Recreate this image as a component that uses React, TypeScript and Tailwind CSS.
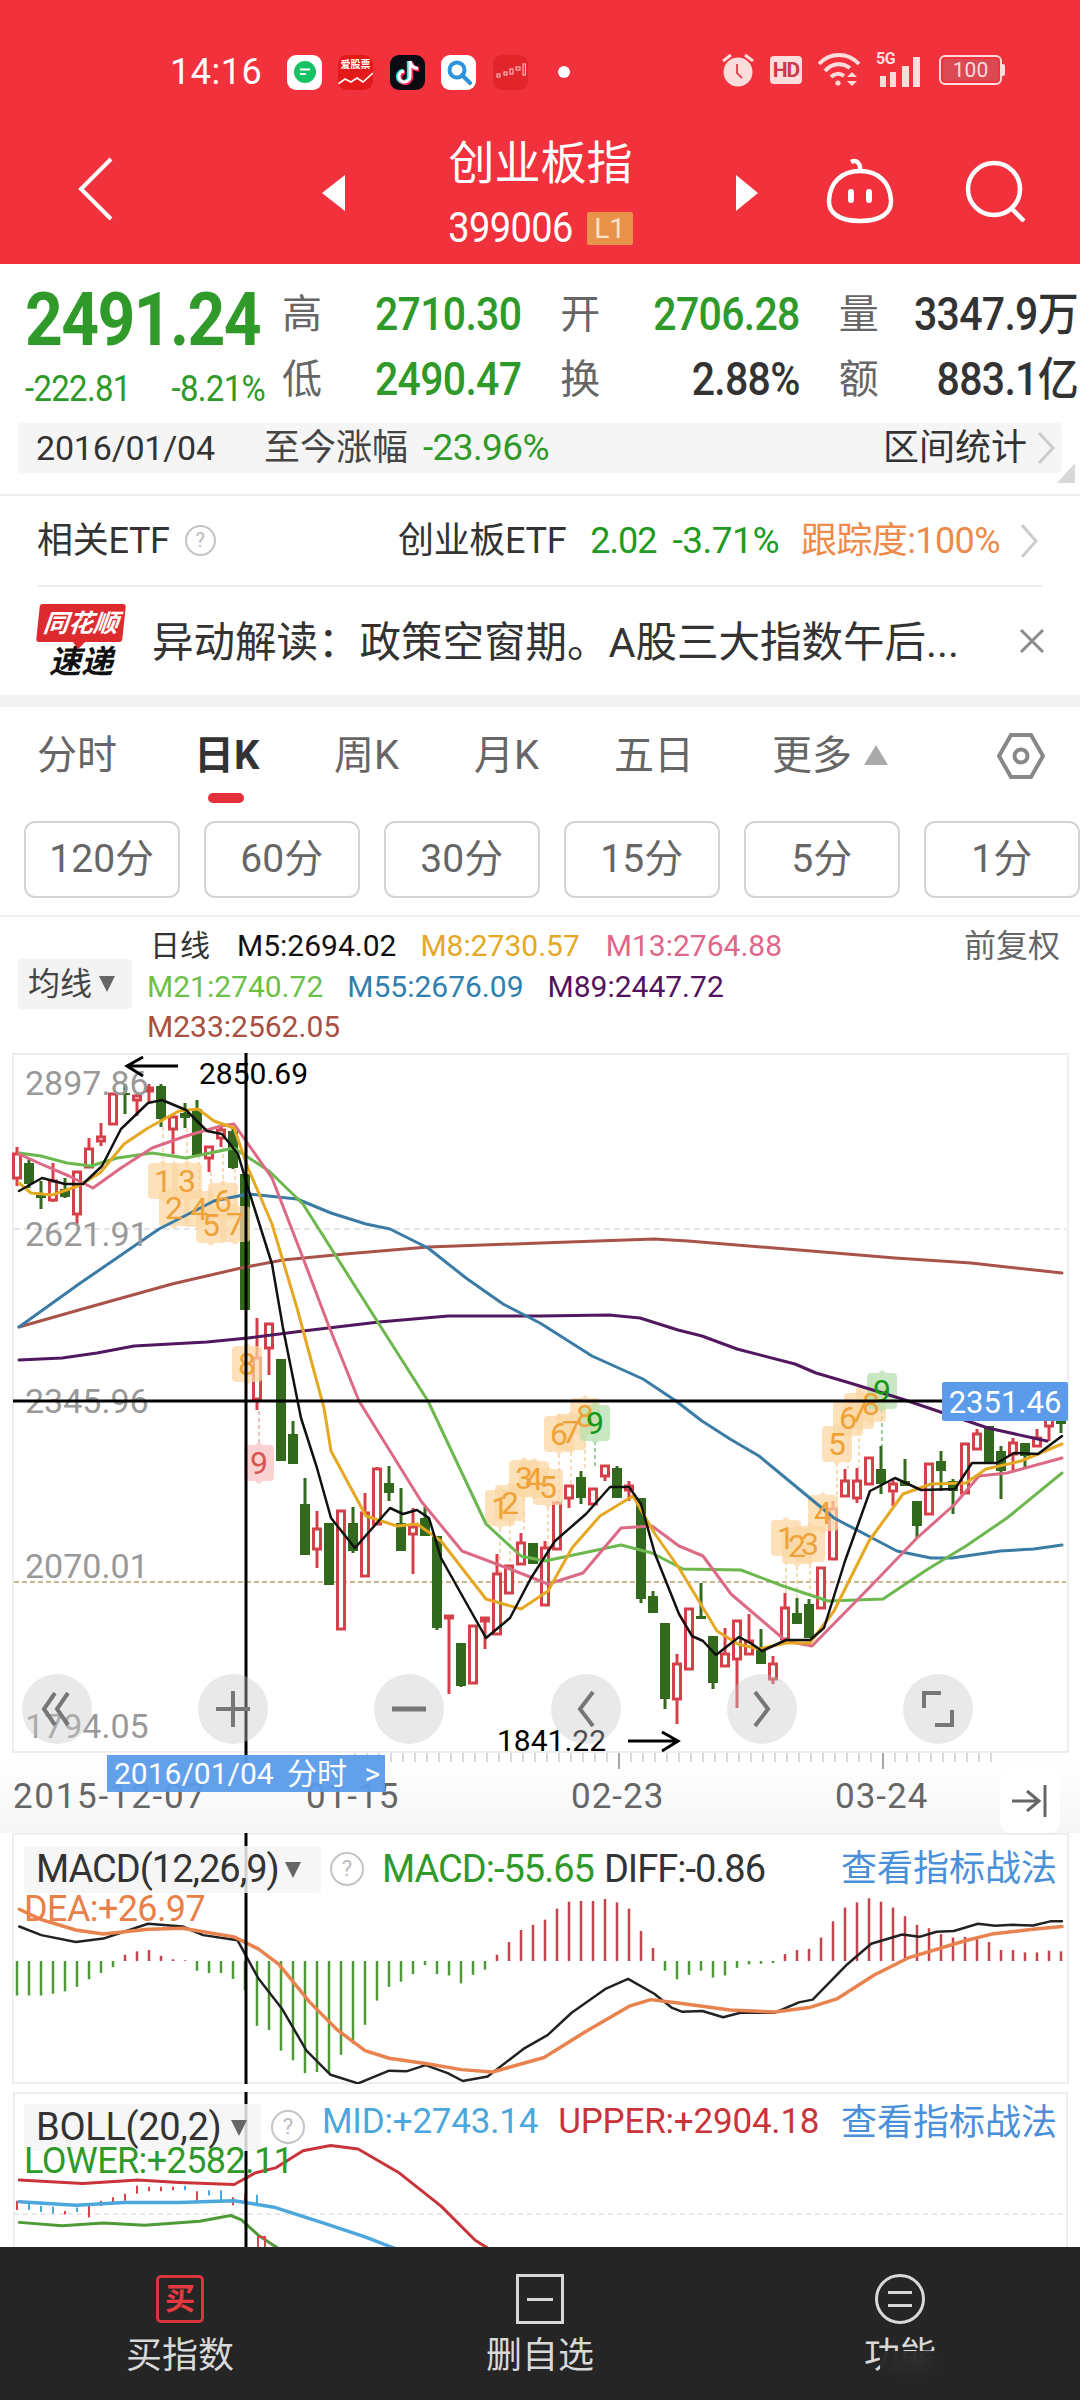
import React from "react";

const GREEN = "#2f9a2a";
const slotX = (i: number) => 17 + 12 * i;

type Candle = [number, number, number, number, "r" | "g"];

// top, bottom of body, then wick top and bottom
const candles: Candle[] = [
  [1153, 1177, 1146, 1185, "r"], [1162, 1183, 1158, 1187, "g"], [1192, 1197, 1180, 1208, "g"], [1180, 1199, 1162, 1201, "r"],
  [1188, 1196, 1177, 1197, "g"], [1171, 1213, 1171, 1223, "r"], [1148, 1166, 1137, 1166, "r"], [1136, 1140, 1122, 1145, "r"],
  [1093, 1123, 1093, 1123, "r"], [1092, 1094, 1083, 1113, "g"], [1095, 1099, 1093, 1115, "r"], [1087, 1090, 1083, 1102, "r"],
  [1085, 1118, 1083, 1126, "g"], [1116, 1128, 1116, 1153, "r"], [1112, 1117, 1102, 1127, "g"], [1108, 1154, 1099, 1154, "g"],
  [1146, 1157, 1146, 1171, "r"], [1129, 1137, 1125, 1146, "r"], [1130, 1167, 1126, 1168, "g"], [1173, 1309, 1173, 1309, "g"],
  [1357, 1398, 1317, 1409, "r"], [1323, 1347, 1323, 1374, "r"], [1358, 1460, 1358, 1460, "g"], [1433, 1463, 1420, 1463, "g"],
  [1503, 1554, 1477, 1554, "g"], [1528, 1548, 1510, 1567, "r"], [1522, 1584, 1522, 1584, "g"], [1510, 1628, 1510, 1628, "r"],
  [1522, 1550, 1506, 1552, "g"], [1512, 1575, 1492, 1575, "r"], [1468, 1523, 1466, 1523, "r"], [1482, 1492, 1465, 1500, "g"],
  [1522, 1550, 1487, 1550, "g"], [1526, 1533, 1507, 1573, "r"], [1517, 1535, 1506, 1535, "g"], [1535, 1627, 1535, 1629, "g"],
  [1615, 1617, 1615, 1693, "r"], [1642, 1685, 1642, 1686, "g"], [1625, 1682, 1625, 1682, "r"], [1617, 1620, 1617, 1648, "r"],
  [1573, 1633, 1553, 1633, "r"], [1565, 1592, 1565, 1592, "r"], [1542, 1563, 1532, 1563, "r"], [1542, 1563, 1542, 1563, "g"],
  [1547, 1604, 1540, 1604, "r"], [1502, 1548, 1500, 1548, "r"], [1485, 1497, 1485, 1507, "r"], [1476, 1497, 1470, 1503, "g"],
  [1488, 1503, 1488, 1504, "r"], [1465, 1475, 1465, 1480, "r"], [1467, 1497, 1465, 1497, "g"], [1485, 1489, 1480, 1500, "r"],
  [1497, 1598, 1497, 1602, "g"], [1595, 1612, 1590, 1612, "g"], [1622, 1698, 1622, 1708, "g"], [1663, 1698, 1653, 1723, "r"],
  [1608, 1668, 1608, 1668, "r"], [1615, 1618, 1582, 1618, "g"], [1635, 1682, 1635, 1688, "g"], [1653, 1665, 1627, 1665, "r"],
  [1620, 1658, 1620, 1707, "r"], [1640, 1653, 1613, 1653, "r"], [1647, 1663, 1628, 1663, "g"], [1663, 1678, 1655, 1683, "r"],
  [1607, 1638, 1592, 1638, "r"], [1612, 1623, 1597, 1623, "g"], [1603, 1637, 1598, 1637, "g"], [1567, 1607, 1567, 1607, "r"],
  [1508, 1558, 1500, 1558, "r"], [1480, 1495, 1468, 1495, "r"], [1480, 1497, 1467, 1502, "r"], [1457, 1483, 1457, 1483, "r"],
  [1468, 1483, 1445, 1493, "g"], [1483, 1490, 1477, 1505, "r"], [1480, 1485, 1458, 1485, "g"], [1500, 1525, 1500, 1537, "g"],
  [1463, 1513, 1463, 1513, "r"], [1460, 1470, 1450, 1490, "g"], [1480, 1490, 1478, 1513, "g"], [1443, 1492, 1443, 1492, "r"],
  [1433, 1448, 1428, 1448, "r"], [1425, 1462, 1425, 1462, "g"], [1450, 1470, 1445, 1498, "g"], [1442, 1453, 1437, 1470, "r"],
  [1442, 1455, 1442, 1468, "g"], [1437, 1445, 1428, 1445, "r"], [1415, 1425, 1408, 1440, "r"], [1415, 1423, 1415, 1432, "g"],
];

const maLines: { color: string; width: number; pts: number[][] }[] = [
  {
    color: "#a8524a",
    width: 3,
    pts: [[19, 1326], [86, 1307], [172, 1283], [241, 1267], [283, 1259], [345, 1253], [428, 1246], [541, 1242], [654, 1238], [688, 1240], [799, 1249], [895, 1257], [971, 1262], [1062, 1272]],
  },
  {
    color: "#52185f",
    width: 3,
    pts: [[19, 1359], [62, 1357], [97, 1352], [134, 1345], [207, 1341], [248, 1337], [303, 1330], [379, 1321], [448, 1315], [541, 1315], [609, 1314], [640, 1317], [678, 1329], [702, 1335], [737, 1348], [795, 1363], [816, 1372], [850, 1382], [902, 1398], [988, 1427], [1047, 1440]],
  },
  {
    color: "#3a7ca5",
    width: 3,
    pts: [[19, 1326], [79, 1283], [159, 1228], [214, 1200], [248, 1193], [297, 1198], [331, 1212], [366, 1223], [390, 1228], [428, 1247], [466, 1277], [503, 1303], [540, 1322], [592, 1355], [643, 1378], [676, 1400], [702, 1420], [730, 1438], [759, 1455], [834, 1517], [897, 1550], [931, 1557], [952, 1557], [1000, 1550], [1034, 1548], [1062, 1544]],
  },
  {
    color: "#6cb84f",
    width: 3,
    pts: [[19, 1152], [41, 1155], [67, 1162], [91, 1165], [117, 1157], [152, 1152], [186, 1157], [234, 1147], [269, 1170], [303, 1203], [379, 1323], [428, 1400], [486, 1523], [521, 1555], [545, 1560], [621, 1544], [652, 1552], [683, 1568], [741, 1569], [783, 1585], [828, 1600], [883, 1598], [928, 1568], [966, 1545], [1007, 1517], [1062, 1472]],
  },
  {
    color: "#dd6a85",
    width: 3,
    pts: [[19, 1153], [41, 1163], [69, 1175], [93, 1187], [121, 1167], [152, 1147], [186, 1135], [221, 1125], [234, 1123], [272, 1177], [303, 1257], [328, 1323], [359, 1400], [421, 1500], [462, 1550], [510, 1568], [548, 1583], [583, 1572], [621, 1527], [652, 1525], [679, 1545], [703, 1555], [731, 1593], [786, 1640], [812, 1645], [869, 1587], [917, 1537], [955, 1503], [979, 1475], [1007, 1472], [1062, 1457]],
  },
  {
    color: "#e5a823",
    width: 3,
    pts: [[19, 1182], [31, 1192], [52, 1194], [78, 1185], [100, 1172], [124, 1143], [148, 1127], [179, 1110], [198, 1108], [214, 1120], [234, 1127], [248, 1167], [272, 1223], [297, 1307], [324, 1407], [331, 1450], [366, 1515], [397, 1525], [417, 1523], [441, 1540], [486, 1598], [521, 1608], [548, 1590], [572, 1547], [600, 1515], [633, 1495], [655, 1533], [679, 1567], [717, 1630], [738, 1643], [759, 1648], [786, 1642], [810, 1642], [834, 1610], [869, 1540], [903, 1493], [931, 1483], [966, 1482], [986, 1468], [1021, 1460], [1062, 1443]],
  },
  {
    color: "#111111",
    width: 2.5,
    pts: [[19, 1190], [42, 1177], [65, 1183], [83, 1183], [102, 1165], [121, 1128], [148, 1102], [162, 1099], [186, 1109], [207, 1130], [222, 1133], [238, 1153], [248, 1187], [272, 1263], [283, 1327], [301, 1417], [317, 1467], [331, 1517], [355, 1547], [390, 1507], [403, 1513], [417, 1509], [429, 1517], [441, 1557], [486, 1637], [510, 1617], [531, 1577], [555, 1540], [586, 1513], [610, 1486], [629, 1486], [641, 1503], [655, 1553], [679, 1613], [692, 1635], [703, 1640], [716, 1654], [739, 1636], [752, 1643], [762, 1650], [786, 1639], [810, 1639], [824, 1627], [845, 1560], [870, 1490], [895, 1477], [921, 1489], [955, 1488], [972, 1462], [997, 1462], [1014, 1452], [1038, 1453], [1062, 1435]],
  },
];

const badges: [string, number, number, "o" | "r" | "g"][] = [
  ["1", 163, 1180, "o"], ["3", 187, 1180, "o"], ["2", 174, 1207, "o"], ["4", 199, 1208, "o"], ["5", 211, 1224, "o"], ["6", 223, 1200, "o"], ["7", 235, 1223, "o"],
  ["8", 247, 1363, "o"], ["9", 259, 1462, "r"],
  ["1", 500, 1507, "o"], ["2", 510, 1502, "o"], ["3", 524, 1477, "o"], ["4", 534, 1478, "o"], ["5", 548, 1486, "o"], ["6", 559, 1433, "o"], ["7", 571, 1431, "o"], ["8", 585, 1415, "o"], ["9", 595, 1422, "g"],
  ["1", 786, 1537, "o"], ["2", 797, 1545, "o"], ["3", 810, 1543, "o"], ["4", 823, 1512, "o"], ["5", 837, 1443, "o"], ["6", 848, 1417, "o"], ["7", 859, 1410, "o"], ["8", 871, 1403, "o"], ["9", 882, 1390, "g"],
];

const connectors: [number, number, number, string][] = [
  [163, 1126, 1165, "#f3cfa0"], [187, 1127, 1165, "#f3cfa0"], [174, 1153, 1190, "#f3cfa0"], [199, 1154, 1192, "#f3cfa0"], [211, 1171, 1205, "#f3cfa0"], [223, 1146, 1185, "#f3cfa0"], [235, 1168, 1205, "#f3cfa0"],
  [259, 1410, 1443, "#eeaaaa"], [500, 1527, 1573, "#f3cfa0"], [510, 1522, 1565, "#f3cfa0"], [524, 1497, 1532, "#f3cfa0"], [548, 1506, 1547, "#f3cfa0"], [559, 1453, 1500, "#f3cfa0"], [571, 1451, 1485, "#f3cfa0"], [585, 1435, 1470, "#f3cfa0"], [595, 1440, 1465, "#7fbf7f"],
  [786, 1560, 1592, "#f3cfa0"], [797, 1565, 1597, "#f3cfa0"], [810, 1563, 1598, "#f3cfa0"], [837, 1462, 1500, "#f3cfa0"], [848, 1437, 1468, "#f3cfa0"], [859, 1430, 1467, "#f3cfa0"], [882, 1408, 1445, "#7fbf7f"],
];

// bar end y for each slot, read off the 2.9x crop
const macdBars = [390, 390, 390, 385, 378, 365, 343, 325, 308, 272, 262, 258, 275, 285, 288, 318, 325, 325, 342, 375, 478, 490, 550, 578, 615, 612, 615, 562, 530, 475, 405, 365, 350, 328, 302, 328, 332, 355, 330, 315, 272, 235, 200, 185, 170, 138, 118, 116, 116, 110, 120, 138, 203, 252, 318, 343, 330, 318, 338, 332, 310, 300, 298, 296, 270, 258, 255, 222, 175, 135, 120, 108, 118, 135, 160, 185, 195, 212, 222, 220, 225, 235, 258, 258, 265, 265, 260, 262];
const macdBlack = [[28, 190], [60, 215], [110, 235], [150, 225], [215, 182], [265, 190], [295, 215], [345, 230], [375, 340], [410, 430], [445, 550], [480, 620], [520, 645], [550, 620], [565, 608], [590, 610], [618, 592], [650, 615], [672, 638], [708, 625], [760, 545], [795, 505], [830, 440], [880, 370], [912, 342], [950, 385], [975, 425], [990, 437], [1020, 435], [1050, 453], [1075, 440], [1125, 440], [1160, 410], [1180, 402], [1230, 300], [1265, 240], [1310, 213], [1335, 220], [1360, 205], [1385, 203], [1420, 182], [1445, 188], [1470, 185], [1500, 187], [1525, 175], [1542, 175]];
const macdOrange = [[28, 140], [60, 170], [110, 200], [150, 212], [215, 198], [265, 195], [340, 220], [375, 255], [405, 300], [450, 410], [490, 490], [530, 550], [565, 572], [620, 588], [670, 605], [715, 612], [790, 570], [850, 495], [915, 420], [945, 402], [985, 412], [1060, 432], [1125, 438], [1175, 425], [1215, 400], [1270, 330], [1320, 280], [1400, 232], [1440, 212], [1500, 198], [1542, 190]];
const bollRed = [[28, 925], [120, 935], [200, 925], [260, 932], [340, 938], [370, 905], [400, 890], [440, 840], [480, 825], [520, 835], [580, 905], [640, 1000], [690, 1100], [710, 1125]];
const bollBlue = [[28, 988], [110, 998], [180, 990], [260, 990], [340, 985], [400, 1005], [470, 1050], [530, 1090], [575, 1125]];
const bollGreen = [[28, 1048], [90, 1058], [150, 1050], [210, 1056], [290, 1045], [335, 1028], [350, 1040], [375, 1085], [405, 1125]];
const bollMini: [number, number, number, string][] = [
  [0, 985, 1012, "#d9444c"], [1, 995, 1012, "#4ba7dc"], [2, 1000, 1018, "#4ba7dc"], [3, 1003, 1022, "#4ba7dc"], [4, 1015, 1025, "#d9444c"], [5, 1005, 1018, "#4ba7dc"], [6, 995, 1034, "#d9444c"],
  [7, 985, 1000, "#d9444c"], [8, 975, 990, "#d9444c"], [9, 965, 985, "#d9444c"], [10, 942, 965, "#d9444c"], [11, 945, 958, "#d9444c"], [12, 945, 958, "#d9444c"], [13, 945, 955, "#d9444c"], [14, 942, 955, "#4ba7dc"],
  [15, 958, 990, "#d9444c"], [16, 955, 970, "#4ba7dc"], [17, 955, 990, "#4ba7dc"], [18, 975, 998, "#d9444c"], [19, 965, 985, "#d9444c"], [20, 968, 1000, "#4ba7dc"],
];

const pts = (list: number[][]) => list.map((p) => p.join(",")).join(" ");
const crop = (list: number[][]) => list.map(([x, y]) => [x / 1.452, 1860 + y / 2.9]);

function Poly({ points, color, width }: { points: number[][]; color: string; width: number }) {
  return <polyline points={pts(points)} fill="none" stroke={color} strokeWidth={width} strokeLinejoin="round" strokeLinecap="round" />;
}

function KChart() {
  return (
    <svg className="block w-[1080px] h-[700px] overflow-visible" viewBox="0 1052 1080 700">
      <rect x={13} y={1053} width={1055} height={698} fill="none" stroke="#eeeeee" strokeWidth={2} />
      <line x1={14} x2={1066} y1={1228} y2={1228} stroke="#dddddd" strokeWidth={1.5} strokeDasharray="6 4" />
      <line x1={14} x2={1066} y1={1581} y2={1581} stroke="#c9b88f" strokeWidth={2} strokeDasharray="5 3" />

      {connectors.map(([x, a, b, c], i) => (
        <line key={i} x1={x} x2={x} y1={a} y2={b} stroke={c} strokeWidth={1.5} strokeDasharray="4 3" />
      ))}

      {candles.map(([top, bottom, wTop, wBottom, kind], i) => {
        const x = slotX(i);
        const c = kind === "r" ? "#d4404a" : "#33691e";
        return (
          <g key={i}>
            <line x1={x} x2={x} y1={wTop} y2={wBottom} stroke={c} strokeWidth={3} />
            {kind === "r" ? (
              <rect x={x - 3.5} y={top} width={7} height={bottom - top} fill="#ffffff" stroke={c} strokeWidth={3} />
            ) : (
              <rect x={x - 5} y={top} width={10} height={bottom - top} fill={c} />
            )}
          </g>
        );
      })}

      {badges.map(([, x, y, kind], i) => (
        <path
          key={i}
          d={`M${x - 15} ${y - 14} q0 -4 4 -4 l7 0 l4 -3 l4 3 l7 0 q4 0 4 4 l0 28 q0 4 -4 4 l-7 0 l-4 3 l-4 -3 l-7 0 q-4 0 -4 -4z`}
          fill={kind === "o" ? "#fbd7a4" : kind === "r" ? "#f8c3c3" : "#b5dfae"}
          opacity={0.75}
        />
      ))}

      {maLines.map((l) => (
        <Poly key={l.color} points={l.pts} color={l.color} width={l.width} />
      ))}

      {badges.map(([label, x, y, kind], i) => (
        <text key={i} x={x} y={y + 11} textAnchor="middle" fontSize={32} fill={kind === "o" ? "#efa238" : kind === "r" ? "#d9534f" : "#129a12"}>
          {label}
        </text>
      ))}

      <text x={25} y={1094} fontSize={34} fill="#999999">2897.86</text>
      <text x={25} y={1245} fontSize={34} fill="#999999">2621.91</text>
      <text x={25} y={1412} fontSize={34} fill="#999999">2345.96</text>
      <text x={25} y={1577} fontSize={34} fill="#999999">2070.01</text>
      <text x={25} y={1737} fontSize={34} fill="#999999">1794.05</text>

      <line x1={13} x2={943} y1={1400} y2={1400} stroke="#000000" strokeWidth={3} />
      <line x1={246} x2={246} y1={1052} y2={1752} stroke="#000000" strokeWidth={3} />

      <g fill="none" stroke="#000000" strokeWidth={3}>
        <path d="M178 1065 L127 1065 M143 1056 L127 1065 L143 1075" />
        <path d="M628 1740 L678 1740 M662 1731 L678 1740 L662 1750" />
      </g>
      <text x={199} y={1083} fontSize={30} fill="#000000">2850.69</text>
      <text x={497} y={1750} fontSize={30} fill="#000000">1841.22</text>

      <rect x={942} y={1381} width={126} height={39} rx={2} fill="#5b9bea" />
      <text x={1005} y={1412} fontSize={31} fill="#ffffff" textAnchor="middle">2351.46</text>
    </svg>
  );
}

function RoundControl({ children }: { children: React.ReactNode }) {
  return (
    <div className="w-[70px] h-[70px] rounded-full bg-[#c8c8c8]/40 flex items-center justify-center">
      <svg width="40" height="40" viewBox="0 0 40 40" fill="none" stroke="#777777" strokeWidth="4">
        {children}
      </svg>
    </div>
  );
}

function ChartControls() {
  return (
    <div className="absolute left-[22px] right-[107px] top-[621px] flex justify-between">
      <RoundControl>
        <path d="M18 4 L7 20 L18 36 M31 4 L20 20 L31 36" />
      </RoundControl>
      <RoundControl>
        <path d="M20 2 V38 M3 20 H37" />
      </RoundControl>
      <RoundControl>
        <path d="M3 20 H37" strokeWidth="5" />
      </RoundControl>
      <RoundControl>
        <path d="M27 3 L14 20 L27 37" />
      </RoundControl>
      <RoundControl>
        <path d="M13 3 L26 20 L13 37" />
      </RoundControl>
      <RoundControl>
        <path d="M23 4 H6 V19 M17 36 H34 V21" />
      </RoundControl>
    </div>
  );
}

function XAxis() {
  const ticks = Array.from({ length: 54 }, (_, i) => 355 + i * 12);
  return (
    <div className="relative h-[80px] bg-gradient-to-b from-white to-[#f6f6f6] text-[35px] text-[#666666] overflow-hidden">
      <svg className="absolute left-0 top-0 w-[1080px] h-[30px]" viewBox="0 0 1080 30">
        {ticks.map((x) => (
          <line key={x} x1={x} x2={x} y1={0} y2={x === 619 || x === 883 ? 16 : 9} stroke={x === 619 || x === 883 ? "#888888" : "#cccccc"} strokeWidth={1.5} />
        ))}
        <line x1={246} x2={246} y1={0} y2={10} stroke="#000000" strokeWidth={3} />
      </svg>
      <div className="absolute inset-x-0 top-[19px] h-[50px]">
        <span className="absolute left-[13px] leading-[50px] tracking-[1.7px]">2015-12-07</span>
        <span className="absolute left-[306px] leading-[50px] tracking-[1px]">01-15</span>
        <span className="absolute left-[571px] leading-[50px] tracking-[1px]">02-23</span>
        <span className="absolute left-[835px] leading-[50px] tracking-[1px]">03-24</span>
      </div>
      <div className="absolute left-[107px] top-[2px] w-[278px] h-[37px] bg-[#5b9bea]/95 text-white text-[30px] leading-[37px] pl-[7px] whitespace-nowrap">
        2016/01/04 <span className="ml-[6px]">分时</span> <span className="ml-[10px]">&gt;</span>
      </div>
      <div className="absolute left-[1000px] top-[15px] w-[60px] h-[65px] bg-white rounded-[12px] flex items-center justify-center">
        <svg width="40" height="34" viewBox="0 0 40 34" fill="none" stroke="#666666" strokeWidth="3">
          <path d="M2 17 H28 M17 7 L29 17 L17 27 M35 1 V33" />
        </svg>
      </div>
    </div>
  );
}

function HelpDot({ size }: { size: number }) {
  return (
    <span
      className="rounded-full border-[2px] border-[#c4c4c4] text-[#bbbbbb] flex items-center justify-center shrink-0"
      style={{ width: size, height: size, fontSize: size * 0.65 }}
    >
      ?
    </span>
  );
}

function Caret() {
  return <span className="w-0 h-0 border-x-[8px] border-x-transparent border-t-[16px] border-t-[#666666] shrink-0" />;
}

function MacdPanel() {
  return (
    <div className="relative h-[251px] overflow-hidden">
      <svg className="block w-[1080px] h-[251px]" viewBox="0 1832 1080 251">
        <rect x={13} y={1833} width={1055} height={249} fill="none" stroke="#eeeeee" strokeWidth={2} />
        {macdBars.map((end, i) => {
          const x = slotX(i);
          const y = 1860 + end / 2.9;
          const red = y < 1960;
          return <line key={i} x1={x} x2={x} y1={1960} y2={y} stroke={red ? "#c0474d" : "#4f9a38"} strokeWidth={2.5} />;
        })}
        <Poly points={crop(macdBlack)} color="#222222" width={2.5} />
        <Poly points={crop(macdOrange)} color="#e8834f" width={3.5} />
        <line x1={246} x2={246} y1={1832} y2={2083} stroke="#000000" strokeWidth={3} />
      </svg>
      <div className="absolute left-[24px] top-[13px] h-[47px] w-[297px] bg-[#f4f4f4]/85 rounded-[4px] flex items-center justify-between pl-[12px] pr-[20px] text-[38px] text-[#333333]">
        <span className="whitespace-nowrap tracking-[-1px]">MACD(12,26,9)</span>
        <Caret />
      </div>
      <div className="absolute left-[330px] top-[19px]">
        <HelpDot size={34} />
      </div>
      <div className="absolute left-[382px] top-[13px] h-[47px] flex items-center gap-[10px] text-[38px] whitespace-nowrap tracking-[-1px]">
        <span style={{ color: GREEN }}>MACD:-55.65</span>
        <span className="text-[#333333]">DIFF:-0.86</span>
      </div>
      <span className="absolute left-[841px] top-[13px] leading-[47px] text-[36px] text-[#4a90d9]">查看指标战法</span>
      <span className="absolute left-[24px] top-[53px] leading-[46px] text-[36px] text-[#e8804a] tracking-[-0.6px]">DEA:+26.97</span>
    </div>
  );
}

function BollPanel() {
  return (
    <div className="relative flex-1 overflow-hidden">
      <svg className="block w-[1080px] h-[156px]" viewBox="0 2091 1080 156">
        <path d="M14 2247 V2092 H1067 V2247" fill="none" stroke="#eeeeee" strokeWidth={2} />
        <line x1={14} x2={1066} y1={2213} y2={2213} stroke="#e2e2e2" strokeWidth={1.5} strokeDasharray="5 4" />
        {bollMini.map(([i, a, b, c]) => (
          <line key={i} x1={slotX(i)} x2={slotX(i)} y1={1860 + a / 2.9} y2={1860 + b / 2.9} stroke={c} strokeWidth={2} />
        ))}
        <Poly points={crop(bollRed)} color="#c9333a" width={3} />
        <Poly points={crop(bollBlue)} color="#4ba7dc" width={3.5} />
        <Poly points={crop(bollGreen)} color="#4f9a38" width={3} />
        <rect x={258} y={2236} width={7} height={12} fill="none" stroke="#d9444c" strokeWidth={2} />
        <line x1={246} x2={246} y1={2091} y2={2247} stroke="#000000" strokeWidth={3} />
      </svg>
      <div className="absolute left-[24px] top-[12px] h-[47px] w-[237px] bg-[#f4f4f4]/85 rounded-[4px] flex items-center justify-between pl-[12px] pr-[14px] text-[38px] text-[#333333]">
        <span className="whitespace-nowrap tracking-[-0.3px]">BOLL(20,2)</span>
        <Caret />
      </div>
      <div className="absolute left-[271px] top-[18px]">
        <HelpDot size={34} />
      </div>
      <div className="absolute left-[322px] top-[7px] h-[47px] flex items-center gap-[20px] text-[35px] whitespace-nowrap tracking-[-0.2px]">
        <span className="text-[#4ba7dc]">MID:+2743.14</span>
        <span className="text-[#c9333a]">UPPER:+2904.18</span>
      </div>
      <span className="absolute left-[841px] top-[8px] leading-[47px] text-[36px] text-[#4a90d9]">查看指标战法</span>
      <span className="absolute left-[24px] top-[47px] leading-[44px] text-[36px] tracking-[-0.6px] whitespace-nowrap" style={{ color: GREEN }}>
        LOWER:+2582.11
      </span>
    </div>
  );
}

function AppIcons() {
  return (
    <div className="flex items-center">
      <span className="w-[35px] h-[35px] rounded-[9px] bg-white flex items-center justify-center">
        <svg width="24" height="24" viewBox="0 0 24 24">
          <circle cx="12" cy="12" r="11" fill="#16c264" />
          <path d="M7 9.5 H17 M7 14 H13" stroke="#ffffff" strokeWidth="2" />
        </svg>
      </span>
      <span className="ml-[16px] w-[35px] h-[35px] rounded-[9px] bg-[#e41a1a] overflow-hidden relative block">
        <span className="absolute inset-x-0 top-[5px] text-center text-[10px] leading-[10px] font-bold text-white">爱股票</span>
        <svg className="absolute left-0 top-[16px]" width="35" height="16" viewBox="0 0 35 16">
          <path d="M0 13 L7 8 L13 11 L19 7 L25 11 L35 2" fill="none" stroke="#ffffff" strokeWidth="1.6" />
        </svg>
      </span>
      <span className="ml-[17px] w-[35px] h-[35px] rounded-[9px] bg-[#0b0b14] flex items-center justify-center">
        <svg width="26" height="28" viewBox="0 0 26 28" fill="none" strokeWidth="4.4">
          <path d="M15 3 V18.5 A5.5 5.5 0 1 1 9 13 M15 3 C15.5 7.5 18.5 10 23 10.5" stroke="#25e6e0" transform="translate(-1 0)" />
          <path d="M15 3 V18.5 A5.5 5.5 0 1 1 9 13 M15 3 C15.5 7.5 18.5 10 23 10.5" stroke="#ff2f5a" transform="translate(1 1)" />
          <path d="M15 3 V18.5 A5.5 5.5 0 1 1 9 13 M15 3 C15.5 7.5 18.5 10 23 10.5" stroke="#ffffff" strokeWidth="3" />
        </svg>
      </span>
      <span className="ml-[16px] w-[35px] h-[35px] rounded-[9px] bg-white flex items-center justify-center">
        <svg width="26" height="26" viewBox="0 0 26 26" fill="none">
          <circle cx="11" cy="11" r="7.5" stroke="#2b93dc" strokeWidth="4" />
          <path d="M16 16 L24 24" stroke="#2b93dc" strokeWidth="4" strokeLinecap="round" />
        </svg>
      </span>
      <span className="ml-[17px] w-[35px] h-[35px] rounded-[9px] bg-[#e2252b] flex items-center justify-center">
        <svg width="32" height="18" viewBox="0 0 32 18" fill="none" stroke="#f9b3b3" strokeWidth="1.2">
          <rect x="2" y="11" width="3" height="3" />
          <rect x="9" y="9" width="3" height="3" />
          <rect x="15" y="6" width="3" height="5" />
          <rect x="21" y="4" width="4" height="3" />
          <rect x="28" y="1" width="2.4" height="11" />
        </svg>
      </span>
      <span className="ml-[30px] w-[12px] h-[12px] rounded-full bg-white" />
    </div>
  );
}

function SystemIcons() {
  const c = "#fddcdc";
  return (
    <div className="flex items-center">
      <svg width="32" height="34" viewBox="0 0 32 34">
        <circle cx="16" cy="19" r="14.5" fill={c} />
        <path d="M15 11 V20 L20 25" fill="none" stroke="#d9505a" strokeWidth="2" />
        <path d="M1 8 L9 2 M31 8 L23 2" stroke={c} strokeWidth="3" />
      </svg>
      <span className="ml-[16px] w-[32px] h-[28px] rounded-[4px] bg-[#fddcdc] text-[#c93b46] text-[21px] leading-[28px] font-bold text-center tracking-[-1px]">HD</span>
      <svg className="ml-[16px]" width="43" height="34" viewBox="0 0 43 34" fill="none" stroke={c} strokeWidth="4">
        <path d="M1 11 C12 -1 30 -1 41 11" />
        <path d="M7 18 C14 10 24 9 32 15" />
        <path d="M13 24 C17 20 22 20 26 23" />
        <circle cx="20" cy="30" r="2.6" fill={c} stroke="none" />
        <path d="M29 24 L34 19 L39 24Z M29 28 L34 33 L39 28Z" fill={c} stroke="none" />
      </svg>
      <span className="ml-[15px] relative w-[47px] h-[34px] block">
        <span className="absolute left-0 top-[-2px] text-[16px] leading-[16px] font-bold text-[#fddcdc] tracking-[-0.5px]">5G</span>
        <span className="absolute left-[4px] bottom-0 w-[6px] h-[11px] bg-[#fddcdc]" />
        <span className="absolute left-[14px] bottom-0 w-[6px] h-[15px] bg-[#fddcdc]" />
        <span className="absolute left-[26px] bottom-0 w-[7px] h-[21px] bg-[#fddcdc]" />
        <span className="absolute left-[37px] bottom-0 w-[7px] h-[30px] bg-[#fddcdc]" />
      </span>
      <span className="ml-[16px] flex items-center">
        <span className="w-[63px] h-[30px] rounded-[6px] border-[2px] border-[#fddcdc] p-[2px] flex">
          <span className="flex-1 rounded-[3px] bg-[#d94a55] text-[#fddcdc] text-[21px] leading-[22px] text-center">100</span>
        </span>
        <span className="w-[3px] h-[12px] bg-[#fddcdc] rounded-r-[2px]" />
      </span>
    </div>
  );
}

function Header() {
  return (
    <div className="h-[264px] bg-[#f1313b] shrink-0 text-white">
      <div className="h-[115px] pt-[53px] pl-[170px] pr-[75px] flex items-start justify-between">
        <div className="flex items-center h-[38px]">
          <span className="text-[36px] leading-none w-[117px] tracking-[0.5px]">14:16</span>
          <AppIcons />
        </div>
        <SystemIcons />
      </div>
      <div className="h-[149px] flex items-start pl-[78px]">
        <svg className="mt-[42px] shrink-0" width="36" height="64" viewBox="0 0 36 64" fill="none" stroke="#ffffff" strokeWidth="4">
          <path d="M33 2 L3 32 L33 62" />
        </svg>
        <span className="mt-[60px] ml-[208px] w-0 h-0 border-y-[18px] border-y-transparent border-r-[23px] border-r-white shrink-0" />
        <div className="w-[391px] shrink-0 flex flex-col items-center pt-[21px]">
          <span className="text-[46px] leading-[54px]">创业板指</span>
          <div className="flex items-center mt-[21px] gap-[14px]">
            <span className="text-[38px] leading-[34px] tracking-[-0.6px] scale-y-[1.1]">399006</span>
            <span className="w-[46px] h-[33px] bg-[#e8924a] rounded-[2px] text-[#fbe3c8] text-[28px] leading-[33px] text-center">L1</span>
          </div>
        </div>
        <span className="mt-[60px] w-0 h-0 border-y-[18px] border-y-transparent border-l-[22px] border-l-white shrink-0" />
        <svg className="mt-[43px] ml-[67px] shrink-0" width="70" height="66" viewBox="0 0 70 66" fill="none" stroke="#ffffff" strokeWidth="4.5">
          <path d="M26 4 C32 1 36 6 35 13" />
          <path d="M35 13 C16 13 5 25 4 42 C3 56 16 63 35 63 C54 63 67 56 66 42 C65 25 54 13 35 13Z" />
          <rect x="23" y="31" width="6" height="14" rx="3" fill="#ffffff" stroke="none" />
          <rect x="41" y="31" width="6" height="14" rx="3" fill="#ffffff" stroke="none" />
        </svg>
        <svg className="mt-[45px] ml-[70px] shrink-0" width="62" height="62" viewBox="0 0 62 62" fill="none" stroke="#ffffff" strokeWidth="4.5">
          <circle cx="29" cy="29" r="26" />
          <path d="M46 48 L59 61" />
        </svg>
      </div>
    </div>
  );
}

function Quote() {
  const row = (label: string, value: string, cls: string) => (
    <div className="flex items-center justify-between h-[65px]">
      <span className="text-[40px] leading-none text-[#666666]">{label}</span>
      <span className={`text-[41px] leading-none tracking-[-0.7px] font-medium whitespace-nowrap scale-y-[1.12] ${cls}`}>{value}</span>
    </div>
  );
  const green = "text-[#2f9a2a]";
  const dark = "text-[#333333]";
  return (
    <div className="h-[232px] shrink-0 bg-white border-b-2 border-[#eeeeee]">
      <div className="flex h-[159px] pt-[18px]">
        <div className="w-[282px] pl-[25px] shrink-0">
          <div className="text-[66px] leading-[76px] font-bold tracking-[-1.6px] whitespace-nowrap scale-y-[1.12] origin-left" style={{ color: GREEN }}>2491.24</div>
          <div className="flex justify-between w-[240px] mt-[14px] text-[33px] leading-[34px] tracking-[-0.7px] scale-y-[1.1]" style={{ color: GREEN }}>
            <span>-222.81</span>
            <span>-8.21%</span>
          </div>
        </div>
        <div className="grid grid-cols-3 content-start gap-x-[39px] w-[796px]">
          {row("高", "2710.30", green)}
          {row("开", "2706.28", green)}
          {row("量", "3347.9万", dark)}
          {row("低", "2490.47", green)}
          {row("换", "2.88%", dark)}
          {row("额", "883.1亿", dark)}
        </div>
      </div>
      <div className="relative mx-[18px] h-[50px] bg-[#f5f5f5] rounded-[4px] flex items-center pl-[18px] pr-[6px]">
        <span className="text-[34px] text-[#333333] tracking-[-0.2px]">2016/01/04</span>
        <span className="ml-[49px] text-[36px] text-[#444444]">至今涨幅</span>
        <span className="ml-[15px] text-[37px] tracking-[-0.6px]" style={{ color: GREEN }}>-23.96%</span>
        <span className="ml-auto text-[36px] text-[#333333]">区间统计</span>
        <svg className="ml-[9px]" width="20" height="34" viewBox="0 0 20 34" fill="none" stroke="#cccccc" strokeWidth="3">
          <path d="M3 2 L17 17 L3 32" />
        </svg>
      </div>
      <span className="block ml-[1057px] -mt-[10px] w-0 h-0 border-l-[18px] border-l-transparent border-b-[20px] border-b-[#d8d8d8]" />
    </div>
  );
}

function EtfRow() {
  return (
    <div className="mx-[37px] h-[91px] shrink-0 border-b-2 border-[#eeeeee] flex items-center whitespace-nowrap">
      <span className="text-[36px] text-[#333333] tracking-[-0.3px]">相关ETF</span>
      <span className="ml-[15px]">
        <HelpDot size={31} />
      </span>
      <span className="ml-auto text-[36px] text-[#333333] tracking-[-0.3px]">创业板ETF</span>
      <span className="ml-[24px] text-[36px] text-[#1f9a22] tracking-[-1px]">2.02</span>
      <span className="ml-[16px] text-[37px] text-[#1f9a22] tracking-[-0.5px]">-3.71%</span>
      <span className="ml-[22px] text-[36px] text-[#ed8a4c] tracking-[-0.6px]">跟踪度:100%</span>
      <svg className="ml-[20px] mr-[5px]" width="18" height="36" viewBox="0 0 18 36" fill="none" stroke="#cccccc" strokeWidth="3">
        <path d="M2 2 L16 18 L2 34" />
      </svg>
    </div>
  );
}

function NewsRow() {
  return (
    <div className="h-[108px] shrink-0 flex items-center pl-[37px]">
      <div className="w-[88px] h-[74px] shrink-0 flex flex-col items-center">
        <div className="relative w-[86px] h-[38px] bg-[#dd2a2f] rounded-[3px] -skew-x-6 flex items-center justify-center">
          <span className="text-white text-[25px] leading-none font-bold italic whitespace-nowrap">同花顺</span>
          <span className="absolute left-[36px] bottom-[-7px] w-0 h-0 border-x-[7px] border-x-transparent border-t-[8px] border-t-[#dd2a2f]" />
        </div>
        <span className="mt-[4px] text-[32px] leading-[32px] font-bold italic text-[#111111] whitespace-nowrap">速递</span>
      </div>
      <span className="ml-[27px] mt-[3px] text-[41.5px] leading-none text-[#333333] whitespace-nowrap">异动解读：政策空窗期。A股三大指数午后...</span>
      <svg className="ml-auto mr-[35px] shrink-0" width="26" height="26" viewBox="0 0 26 26" stroke="#8a8a8a" strokeWidth="3">
        <path d="M2 2 L24 24 M24 2 L2 24" />
      </svg>
    </div>
  );
}

function Tabs() {
  return (
    <div className="relative h-[114px] shrink-0 text-[40px] text-[#666666]">
      <div className="absolute left-0 right-0 top-[28px] h-[42px]">
        <span className="absolute left-[37px] leading-[42px]">分时</span>
        <span className="absolute left-[194px] leading-[42px] font-bold text-[#333333]">日K</span>
        <span className="absolute left-[334px] leading-[42px]">周K</span>
        <span className="absolute left-[474px] leading-[42px]">月K</span>
        <span className="absolute left-[614px] leading-[42px]">五日</span>
        <span className="absolute left-[772px] leading-[42px]">更多</span>
        <span className="absolute left-[864px] top-[10px] w-0 h-0 border-x-[12px] border-x-transparent border-b-[20px] border-b-[#aaaaaa]" />
        <svg className="absolute left-[997px] top-[-3px]" width="48" height="48" viewBox="0 0 48 48" fill="none" stroke="#888888" strokeWidth="4">
          <path d="M14 3 H34 L46 24 L34 45 H14 L2 24Z" />
          <circle cx="24" cy="24" r="6.5" />
        </svg>
      </div>
      <span className="absolute left-[208px] top-[86px] w-[36px] h-[10px] rounded-full bg-[#e5303a]" />
    </div>
  );
}

function PeriodButtons() {
  const items = ["120分", "60分", "30分", "15分", "5分", "1分"];
  return (
    <div className="h-[96px] shrink-0 border-b-2 border-[#eeeeee] flex pl-[24px] gap-[24.5px]">
      {items.map((t) => (
        <div key={t} className="w-[155.5px] h-[77px] shrink-0 border-2 border-[#d4d4d4] rounded-[11px] flex items-center justify-center text-[39px] text-[#666666]">
          {t}
        </div>
      ))}
    </div>
  );
}

function Legend() {
  return (
    <div className="relative h-[136px] shrink-0 text-[30px] leading-[40px] whitespace-nowrap">
      <div className="absolute left-[18px] top-[42px] w-[114px] h-[50px] bg-[#f3f3f3] rounded-[4px] flex items-center pl-[10px] gap-[7px] text-[#444444] text-[32px]">
        均线
        <Caret />
      </div>
      <div className="absolute left-[150px] top-[9px] flex">
        <span className="text-[#333333] text-[30px]">日线</span>
        <span className="ml-[27px] text-[#111111]">M5:2694.02</span>
        <span className="ml-[24px] text-[#e5a823]">M8:2730.57</span>
        <span className="ml-[26px] text-[#e0678a]">M13:2764.88</span>
      </div>
      <span className="absolute left-[964px] top-[9px] text-[#666666] text-[32px]">前复权</span>
      <div className="absolute left-[147px] top-[50px] flex">
        <span className="text-[#6cc04a]">M21:2740.72</span>
        <span className="ml-[24px] text-[#2f7fb0]">M55:2676.09</span>
        <span className="ml-[24px] text-[#52135e]">M89:2447.72</span>
      </div>
      <span className="absolute left-[147px] top-[90px] text-[#a8503f]">M233:2562.05</span>
    </div>
  );
}

function NavItem({ label, icon }: { label: string; icon: React.ReactNode }) {
  return (
    <div className="w-[360px] flex flex-col items-center pt-[27px]">
      <div className="h-[50px] flex items-center">{icon}</div>
      <span className="mt-[13px] text-[36px] leading-[38px] text-[#d8d8d8]">{label}</span>
    </div>
  );
}

function BottomNav() {
  return (
    <div className="relative h-[153px] shrink-0 bg-[#252525] flex overflow-hidden">
      <NavItem
        label="买指数"
        icon={
          <span className="w-[48px] h-[48px] rounded-[5px] border-[3px] border-[#d8343c] text-[#e5383f] text-[30px] leading-[42px] font-bold text-center">买</span>
        }
      />
      <NavItem
        label="删自选"
        icon={
          <span className="w-[48px] h-[50px] border-[3px] border-[#d8d8d8] flex items-center justify-center">
            <span className="w-[26px] h-[3px] bg-[#d8d8d8]" />
          </span>
        }
      />
      <NavItem
        label="功能"
        icon={
          <span className="w-[50px] h-[50px] rounded-full border-[3px] border-[#d8d8d8] flex flex-col items-center justify-center gap-[10px]">
            <span className="w-[24px] h-[3px] bg-[#d8d8d8]" />
            <span className="w-[24px] h-[3px] bg-[#d8d8d8]" />
          </span>
        }
      />
      <div className="absolute left-[880px] top-[104px] w-[200px] h-[49px] bg-[#252525]/90 backdrop-blur-sm" />
    </div>
  );
}

export default function App() {
  return (
    <div className="w-[1080px] h-[2400px] bg-white flex flex-col overflow-hidden font-['Roboto','Noto_Sans_CJK_SC',sans-serif]">
      <Header />
      <Quote />
      <EtfRow />
      <NewsRow />
      <div className="h-[12px] shrink-0 bg-[#f2f2f2]" />
      <Tabs />
      <PeriodButtons />
      <Legend />
      <div className="relative h-[700px] shrink-0">
        <KChart />
        <ChartControls />
      </div>
      <XAxis />
      <MacdPanel />
      <div className="h-[8px] shrink-0" />
      <BollPanel />
      <BottomNav />
    </div>
  );
}
